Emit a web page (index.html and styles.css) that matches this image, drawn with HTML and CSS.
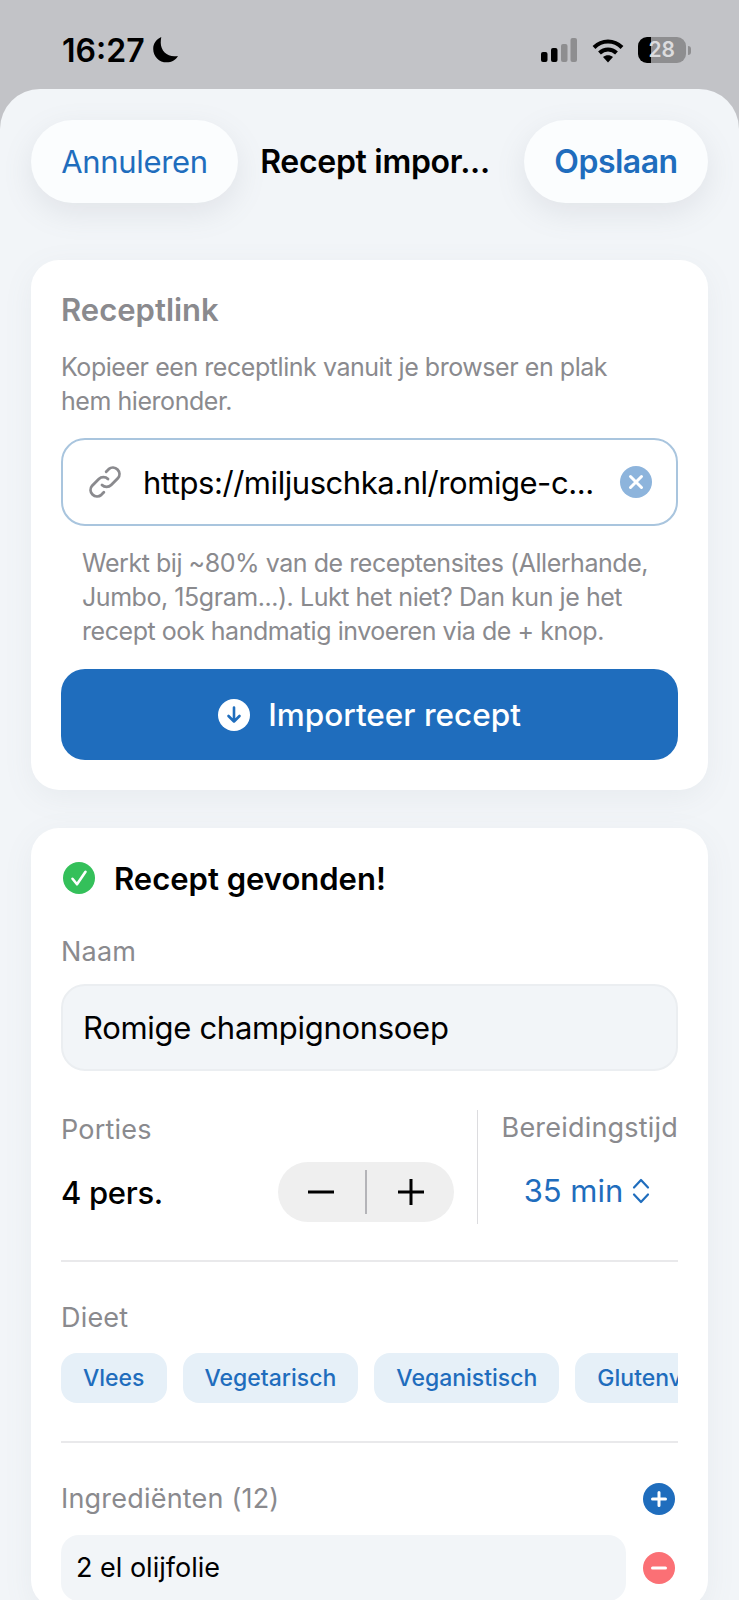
FILE: index.html
```html
<!DOCTYPE html>
<html lang="nl">
<head>
    <meta charset="UTF-8">
    <meta name="viewport" content="width=device-width, initial-scale=1.0">
    <title>Recept importeren</title>
    <link rel="stylesheet" href="styles.css">
</head>
<body>

    <!-- Status bar -->
    <div class="status-bar">
        <div class="status-left">
            <span class="status-time">16:27</span>
            <svg class="moon" width="29" height="28" viewBox="0 0 27 26"><path d="M10.500 1C6 3 3 7 3 12c0 7 5.500 12.500 12.500 12.500 4.500 0 8.500-2.400 10.500-6-1 .3-2.200.4-3.300.4C15.500 18.900 10 13.400 10 6.300c0-1.900.2-3.600.5-5.300z" fill="#000"/></svg>
        </div>
        <div class="status-right">
            <svg width="36" height="24" viewBox="0 0 36 24">
                <rect x="0" y="14" width="6.500" height="10" rx="2" fill="#000"/>
                <rect x="10" y="10" width="6.500" height="14" rx="2" fill="#000"/>
                <rect x="20" y="6" width="6.500" height="18" rx="2" fill="#8e8e90"/>
                <rect x="29.500" y="0" width="6.500" height="24" rx="2" fill="#8e8e90"/>
            </svg>
            <svg class="wifi" width="32" height="25" viewBox="0 0 32 25" fill="none" stroke="#000" stroke-width="4">
                <path d="M2 9.500C10 1.500 22 1.500 30 9.500"/>
                <path d="M7.500 15c5-4.800 12-4.800 17 0"/>
                <path d="M16 24.500l-5-5.500c3-2.300 7-2.300 10 0z" fill="#000" stroke="none"/>
            </svg>
            <div class="battery">28</div>
            <div class="battery-tip"></div>
        </div>
    </div>

    <div class="sheet">
        <div class="nav">
            <div class="nav-btn cancel">Annuleren</div>
            <div class="nav-title">Recept impor...</div>
            <div class="nav-btn save">Opslaan</div>
        </div>

        <!-- Link card -->
        <div class="card link-card">
            <h2 class="card-title">Receptlink</h2>
            <p class="intro">Kopieer een receptlink vanuit je browser en plak hem hieronder.</p>
            <div class="url-field">
                <svg class="link-icon" width="40" height="40" viewBox="0 0 24 24" fill="none" stroke="#8a8a8e" stroke-width="1.700" stroke-linecap="round">
                    <path d="M10.200 13.800a3.900 3.900 0 0 0 5.500 0l4-4a3.900 3.900 0 0 0-5.500-5.500l-1.500 1.500"/>
                    <path d="M13.800 10.200a3.900 3.900 0 0 0-5.500 0l-4 4a3.900 3.900 0 0 0 5.500 5.500l1.500-1.500"/>
                </svg>
                <span class="url-text">https://miljuschka.nl/romige-c...</span>
                <svg width="32" height="32" viewBox="0 0 32 32"><circle cx="16" cy="16" r="16" fill="#8db4dc"/><path d="M10.500 10.500l11 11M21.500 10.500l-11 11" stroke="#fff" stroke-width="3" stroke-linecap="round"/></svg>
            </div>
            <p class="hint">Werkt bij ~80% van de receptensites (Allerhande, Jumbo, 15gram...). Lukt het niet? Dan kun je het recept ook handmatig invoeren via de + knop.</p>
            <div class="import-btn">
                <svg width="32" height="32" viewBox="0 0 32 32"><circle cx="16" cy="16" r="16" fill="#fff"/><path d="M16 8.500v14M10.500 17l5.500 5.500 5.500-5.500" fill="none" stroke="#1f6dbd" stroke-width="2.600" stroke-linecap="round" stroke-linejoin="round"/></svg>
                <span>Importeer recept</span>
            </div>
        </div>

        <!-- Result card -->
        <div class="card result-card">
            <div class="found">
                <svg width="32" height="32" viewBox="0 0 32 32"><circle cx="16" cy="16" r="16" fill="#34c05a"/><path d="M9.500 16.800l4.500 5.500 8.500-12.500" fill="none" stroke="#fff" stroke-width="2.600" stroke-linecap="round" stroke-linejoin="round"/></svg>
                <span>Recept gevonden!</span>
            </div>

            <div class="label name-label">Naam</div>
            <div class="name-field">Romige champignonsoep</div>

            <div class="meta">
                <div class="portions">
                    <div class="label">Porties</div>
                    <div class="portions-row">
                        <span class="portions-value">4 pers.</span>
                        <div class="stepper">
                            <svg width="26" height="28" viewBox="0 0 26 28"><path d="M0 14h26" stroke="#000" stroke-width="3"/></svg>
                            <div class="stepper-line"></div>
                            <svg width="26" height="28" viewBox="0 0 26 28"><path d="M0 14h26M13 1v26" stroke="#000" stroke-width="3"/></svg>
                        </div>
                    </div>
                </div>
                <div class="time">
                    <div class="label">Bereidingstijd</div>
                    <div class="time-value">
                        <span>35 min</span>
                        <svg width="18" height="26" viewBox="0 0 18 26" fill="none" stroke="#1f6dbd" stroke-width="2.200" stroke-linecap="round" stroke-linejoin="round"><path d="M2 9.500L9 2l7 7.500M2 16.500L9 24l7-7.500"/></svg>
                    </div>
                </div>
            </div>

            <hr class="rule">

            <div class="label">Dieet</div>
            <div class="chips">
                <span class="chip">Vlees</span>
                <span class="chip">Vegetarisch</span>
                <span class="chip">Veganistisch</span>
                <span class="chip">Glutenvrij</span>
            </div>

            <hr class="rule rule-diet">

            <div class="ingredients-head">
                <div class="label">Ingrediënten (12)</div>
                <svg width="32" height="32" viewBox="0 0 32 32"><circle cx="16" cy="16" r="16" fill="#1f6dbd"/><path d="M16 9.500v13M9.500 16h13" stroke="#fff" stroke-width="3" stroke-linecap="round"/></svg>
            </div>
            <div class="ingredient">
                <div class="ingredient-text">2 el olijfolie</div>
                <svg width="32" height="32" viewBox="0 0 32 32"><circle cx="16" cy="16" r="16" fill="#fb7075"/><path d="M9.500 16h13" stroke="#fff" stroke-width="3" stroke-linecap="round"/></svg>
            </div>
        </div>
    </div>

</body>
</html>
```

FILE: styles.css
```css
* {
    box-sizing: border-box;
}
html, body {
    margin: 0;
    height: 1600px;
    overflow: hidden;
}
body {
    width: 739px;
    background-color: #c2c3c7;
    font-family: Inter, "Noto Sans", sans-serif;
    color: #000;
}
p, h2 {
    margin: 0;
}
svg {
    display: block;
    flex: none;
}

/* status bar */
.status-bar {
    height: 89px;
    padding: 36px 48px 0 62px;
    display: flex;
    justify-content: space-between;
    align-items: flex-start;
}
.status-left {
    display: flex;
    align-items: center;
    gap: 5px;
    height: 28px;
}
.status-time {
    font-size: 32px;
    font-weight: 600;
}
.status-right {
    display: flex;
    align-items: center;
    padding-top: 1px;
}
.wifi {
    margin-left: 15px;
}
.battery {
    width: 48px;
    height: 26px;
    margin-left: 14px;
    border-radius: 9px;
    background: linear-gradient(to right, #000 13px, #8e8e90 13px);
    color: #dcdcde;
    font-size: 21px;
    font-weight: 600;
    line-height: 26px;
    text-align: right;
    padding-right: 11px;
}
.battery-tip {
    width: 3px;
    height: 9px;
    margin-left: 2px;
    background: #8e8e90;
    border-radius: 0 3px 3px 0;
}

/* sheet */
.sheet {
    height: 1511px;
    padding: 31px 31px 0 31px;
    background-color: #f2f5f8;
    border-radius: 40px 40px 0 0;
}
.nav {
    display: flex;
    align-items: center;
    justify-content: space-between;
    height: 83px;
}
.nav-btn {
    height: 83px;
    border-radius: 42px;
    background: #fbfdfe;
    box-shadow: 0 10px 30px rgba(120, 130, 145, 0.14);
    display: flex;
    align-items: center;
    justify-content: center;
    color: #1f6dbd;
}
.cancel {
    width: 207px;
    font-size: 31px;
    letter-spacing: -0.35px;
}
.save {
    width: 184px;
    font-size: 32px;
    font-weight: 600;
    letter-spacing: -0.5px;
}
.nav-title {
    padding-right: 12px;
    font-size: 32px;
    font-weight: 600;
    letter-spacing: -0.3px;
}

/* cards */
.card {
    background: #fff;
    border-radius: 28px;
    padding: 30px;
    box-shadow: 0 8px 30px rgba(120, 130, 145, 0.08);
}
.link-card {
    margin-top: 57px;
    height: 530px;
}
.result-card {
    margin-top: 38px;
    height: 780px;
    padding-top: 33px;
}
.card-title {
    font-size: 31px;
    font-weight: 600;
    line-height: 40px;
    color: #8a8a8e;
}
.intro {
    margin-top: 20px;
    padding-right: 30px;
    font-size: 25px;
    line-height: 34px;
    letter-spacing: -0.45px;
    color: #8a8a8e;
}
.url-field {
    margin-top: 20px;
    height: 88px;
    border: 2px solid #a9c5de;
    border-radius: 24px;
    padding: 0 24px 0 22px;
    display: flex;
    align-items: center;
}
.link-icon {
    margin-right: 18px;
}
.url-text {
    flex: 1;
    font-size: 31px;
    white-space: nowrap;
    letter-spacing: -0.45px;
}
.hint {
    margin-top: 20px;
    padding-left: 21px;
    font-size: 25px;
    line-height: 34px;
    letter-spacing: -0.45px;
    color: #8a8a8e;
}
.import-btn {
    margin-top: 21px;
    height: 91px;
    border-radius: 24px;
    background: #1f6dbd;
    color: #fff;
    font-size: 31.5px;
    font-weight: 500;
    display: flex;
    align-items: center;
    justify-content: center;
    gap: 18px;
}
.found {
    display: flex;
    align-items: center;
    gap: 19px;
    padding-left: 2px;
    height: 34px;
    font-size: 31px;
    font-weight: 600;
}
.label {
    font-size: 27px;
    line-height: 36px;
    letter-spacing: 0.2px;
    color: #8a8a8e;
}
.name-label {
    margin-top: 39px;
}
.name-field {
    margin-top: 14px;
    height: 87px;
    background: #f2f5f8;
    border: 2px solid #ebeef1;
    border-radius: 24px;
    padding: 0 20px;
    display: flex;
    align-items: center;
    font-size: 31px;
    letter-spacing: -0.3px;
}
.meta {
    margin-top: 39px;
    display: flex;
    height: 114px;
}
.portions {
    width: 417px;
    padding: 2px 23px 0 0;
    border-right: 1px solid #dcdcdf;
}
.portions-row {
    margin-top: 14px;
    display: flex;
    align-items: center;
    justify-content: space-between;
}
.portions-value {
    font-size: 31px;
    font-weight: 500;
    letter-spacing: -0.3px;
}
.stepper {
    width: 176px;
    height: 60px;
    border-radius: 30px;
    background: #efefef;
    display: flex;
    align-items: center;
    justify-content: center;
    gap: 31px;
}
.stepper-line {
    width: 2px;
    height: 44px;
    background: #b4b4b8;
}
.time {
    flex: 1;
    padding-left: 22px;
    text-align: right;
}
.time .label {
    white-space: nowrap;
}
.time-value {
    margin-top: 26px;
    padding-right: 4px;
    display: flex;
    align-items: center;
    justify-content: center;
    gap: 9px;
    font-size: 31px;
    color: #1f6dbd;
}
.rule {
    margin: 36px 0 0 0;
    border: 0;
    height: 2px;
    background: #e9e9eb;
}
.rule + .label {
    margin-top: 38px;
}
.chips {
    margin-top: 17px;
    display: flex;
    gap: 16px;
    overflow: hidden;
}
.chip {
    flex: none;
    height: 50px;
    padding: 0 22px;
    border-radius: 16px;
    background: #e6f0f8;
    color: #1f6dbd;
    font-size: 23px;
    font-weight: 500;
    line-height: 50px;
}
.rule-diet {
    margin-top: 38px;
}
.ingredients-head {
    margin-top: 38px;
    display: flex;
    align-items: center;
    justify-content: space-between;
    padding-right: 3px;
}
.ingredient {
    margin-top: 18px;
    display: flex;
    align-items: center;
    justify-content: space-between;
    padding-right: 3px;
}
.ingredient-text {
    width: 565px;
    height: 66px;
    border-radius: 18px;
    background: #f2f5f8;
    padding: 0 15px;
    font-size: 27px;
    line-height: 66px;
}
```
